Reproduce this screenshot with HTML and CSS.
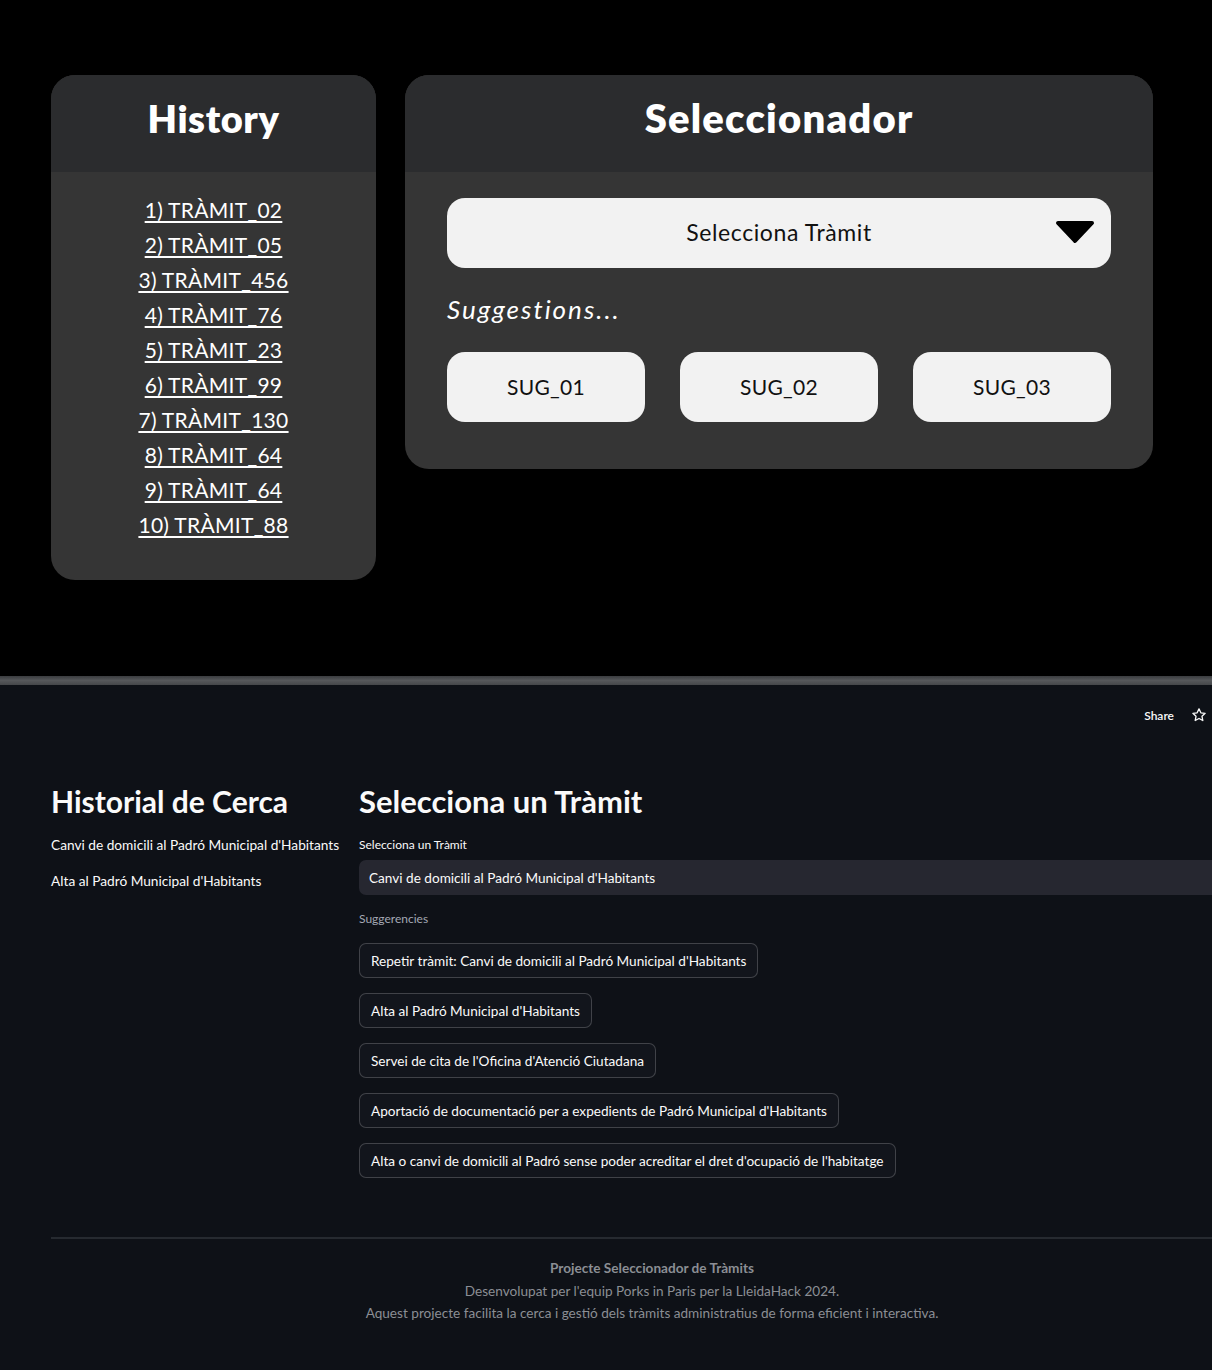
FILE: index.html
```html
<!DOCTYPE html>
<html lang="ca">
<head>
<meta charset="utf-8">
<title>Seleccionador de Tràmits</title>
<link rel="stylesheet" href="styles.css">
</head>
<body>
<section class="mock">
  <div class="mock-row">
    <div class="card history">
      <div class="card-head"><h2 class="card-title">History</h2></div>
      <div class="card-body history-body">
        <a href="#" class="hist-link">1) TRÀMIT_02</a>
        <a href="#" class="hist-link">2) TRÀMIT_05</a>
        <a href="#" class="hist-link">3) TRÀMIT_456</a>
        <a href="#" class="hist-link">4) TRÀMIT_76</a>
        <a href="#" class="hist-link">5) TRÀMIT_23</a>
        <a href="#" class="hist-link">6) TRÀMIT_99</a>
        <a href="#" class="hist-link">7) TRÀMIT_130</a>
        <a href="#" class="hist-link">8) TRÀMIT_64</a>
        <a href="#" class="hist-link">9) TRÀMIT_64</a>
        <a href="#" class="hist-link">10) TRÀMIT_88</a>
      </div>
    </div>
    <div class="card selector">
      <div class="card-head"><h2 class="card-title big">Seleccionador</h2></div>
      <div class="card-body selector-body">
        <div class="dropdown">
          <span class="dropdown-text">Selecciona Tràmit</span>
          <svg class="dropdown-arrow" width="40" height="24" viewBox="0 0 40 24"><path d="M3 3 L37 3 L20 21 Z" fill="#000" stroke="#000" stroke-width="4" stroke-linejoin="round"/></svg>
        </div>
        <p class="sugg-title">Suggestions...</p>
        <div class="sugg-row">
          <button class="sugg-btn">SUG_01</button>
          <button class="sugg-btn">SUG_02</button>
          <button class="sugg-btn">SUG_03</button>
        </div>
      </div>
    </div>
  </div>
</section>
<div class="split"></div>
<section class="app">
  <header class="app-bar">
    <span class="share">Share</span>
    <svg class="star" width="16" height="16" viewBox="0 0 24 24"><path d="M12 2.8l2.8 5.9 6.4.8-4.7 4.4 1.2 6.4L12 17.2l-5.7 3.1 1.2-6.4-4.7-4.4 6.4-.8z" fill="none" stroke="#fafafa" stroke-width="2" stroke-linejoin="round"/></svg>
  </header>
  <main class="app-main">
    <div class="cols">
      <div class="col-left">
        <h1 class="app-h">Historial de Cerca</h1>
        <p class="hist-item">Canvi de domicili al Padró Municipal d'Habitants</p>
        <p class="hist-item">Alta al Padró Municipal d'Habitants</p>
      </div>
      <div class="col-right">
        <h1 class="app-h wide">Selecciona un Tràmit</h1>
        <label class="field-label">Selecciona un Tràmit</label>
        <div class="selectbox">Canvi de domicili al Padró Municipal d'Habitants</div>
        <p class="field-label muted">Suggerencies</p>
        <div class="btn-list">
          <button class="st-btn">Repetir tràmit: Canvi de domicili al Padró Municipal d'Habitants</button>
          <button class="st-btn">Alta al Padró Municipal d'Habitants</button>
          <button class="st-btn">Servei de cita de l'Oficina d'Atenció Ciutadana</button>
          <button class="st-btn">Aportació de documentació per a expedients de Padró Municipal d'Habitants</button>
          <button class="st-btn">Alta o canvi de domicili al Padró sense poder acreditar el dret d'ocupació de l'habitatge</button>
        </div>
      </div>
    </div>
    <footer class="foot">
      <p class="foot-title">Projecte Seleccionador de Tràmits</p>
      <p>Desenvolupat per l'equip Porks in Paris per la LleidaHack 2024.</p>
      <p>Aquest projecte facilita la cerca i gestió dels tràmits administratius de forma eficient i interactiva.</p>
    </footer>
  </main>
</section>
</body>
</html>
```
FILE: styles.css
```css
* { box-sizing: border-box; }
html, body { margin: 0; padding: 0; }
body {
  width: 1212px;
  height: 1370px;
  overflow: hidden;
  background: #0e1117;
  font-family: Lato, "Noto Sans", sans-serif;
}

/* ---------- top mock ---------- */
.mock {
  height: 676px;
  background: #000;
  padding: 75px 0 0 51px;
}
.mock-row {
  display: flex;
  align-items: flex-start;
  gap: 29px;
}
.card {
  border-radius: 24px;
  overflow: hidden;
  background: #353535;
}
.card-head {
  height: 97px;
  background: #2b2c2e;
  display: flex;
  justify-content: center;
  padding-top: 19px;
}
.card-title {
  margin: 0;
  color: #fff;
  font-family: Lato, sans-serif;
  font-weight: 800;
  font-size: 38px;
  line-height: 48px;
  letter-spacing: 0.6px;
}
.card-title.big { font-size: 40px; letter-spacing: 1.2px; }
.history { width: 325px; }
.history-body {
  display: flex;
  flex-direction: column;
  align-items: center;
  padding: 20px 0 38px;
}
.hist-link {
  color: #fff;
  font-size: 21px;
  line-height: 35px;
  text-decoration: underline;
  text-decoration-thickness: 2px;
  text-underline-offset: 3px;
  letter-spacing: 0.3px;
}
.selector { width: 748px; }
.selector-body { padding: 26px 42px 47px; }
.dropdown {
  height: 70px;
  border-radius: 18px;
  background: #f2f2f2;
  display: flex;
  align-items: center;
  justify-content: center;
  position: relative;
}
.dropdown-text {
  font-size: 23px;
  color: #111;
  letter-spacing: 0.6px;
  margin-top: -2px;
}
.dropdown-arrow {
  position: absolute;
  right: 16px;
  top: 22px;
}
.sugg-title {
  margin: 24px 0 0;
  color: #fff;
  font-style: italic;
  font-size: 26px;
  line-height: 34px;
  letter-spacing: 2px;
}
.sugg-row {
  margin-top: 26px;
  display: grid;
  grid-template-columns: repeat(3, 1fr);
  gap: 35px;
}
.sugg-btn {
  height: 70px;
  border: 0;
  border-radius: 18px;
  background: #f2f2f2;
  color: #111;
  font-family: Lato, sans-serif;
  font-size: 21px;
  letter-spacing: 0.3px;
  padding-bottom: 2px;
}

.split {
  height: 9px;
  background: linear-gradient(#3a3c3f, #56585b 50%, #45474a);
}

/* ---------- streamlit app ---------- */
.app {
  height: 685px;
  background: #0e1117;
  color: #fafafa;
  font-family: Lato, "Noto Sans", sans-serif;
}
.app-bar {
  height: 60px;
  display: flex;
  justify-content: flex-end;
  align-items: center;
  gap: 17px;
  padding: 0 5px 0 0;
}
.share {
  font-size: 12px;
  font-weight: 600;
}
.star { display: block; }
.app-main {
  width: 1202px;
  margin-left: 51px;
  padding-top: 37px;
}
.cols {
  display: grid;
  grid-template-columns: 292px 1fr;
  gap: 16px;
}
.app-h {
  margin: 0;
  font-size: 30px;
  line-height: 38px;
  font-weight: 700;
}
.app-h.wide { font-size: 31px; }
.hist-item {
  margin: 16px 0 0;
  font-size: 13.7px;
  line-height: 18px;
}
.hist-item + .hist-item { margin-top: 18px; }
.field-label {
  display: block;
  margin: 16px 0 0;
  font-size: 12px;
  line-height: 18px;
}
.field-label.muted {
  color: #a3a8b4;
  margin-top: 15px;
}
.selectbox {
  margin-top: 6px;
  height: 35px;
  border-radius: 7px;
  background: #262730;
  padding: 0 10px;
  display: flex;
  align-items: center;
  font-size: 13.6px;
}
.btn-list {
  margin-top: 15px;
  display: flex;
  flex-direction: column;
  align-items: flex-start;
  gap: 15px;
}
.st-btn {
  height: 35px;
  padding: 0 11px;
  border: 1px solid rgba(250, 250, 250, 0.2);
  border-radius: 7px;
  background: #12151c;
  color: #fafafa;
  font-family: Lato, "Noto Sans", sans-serif;
  font-size: 13.6px;
}
.foot {
  margin-top: 59px;
  border-top: 2px solid #262a30;
  padding-top: 18px;
  text-align: center;
  color: #8b8e94;
  font-size: 13.6px;
}
.foot p {
  margin: 0;
  line-height: 22.5px;
}
.foot .foot-title { font-weight: 700; }
```
